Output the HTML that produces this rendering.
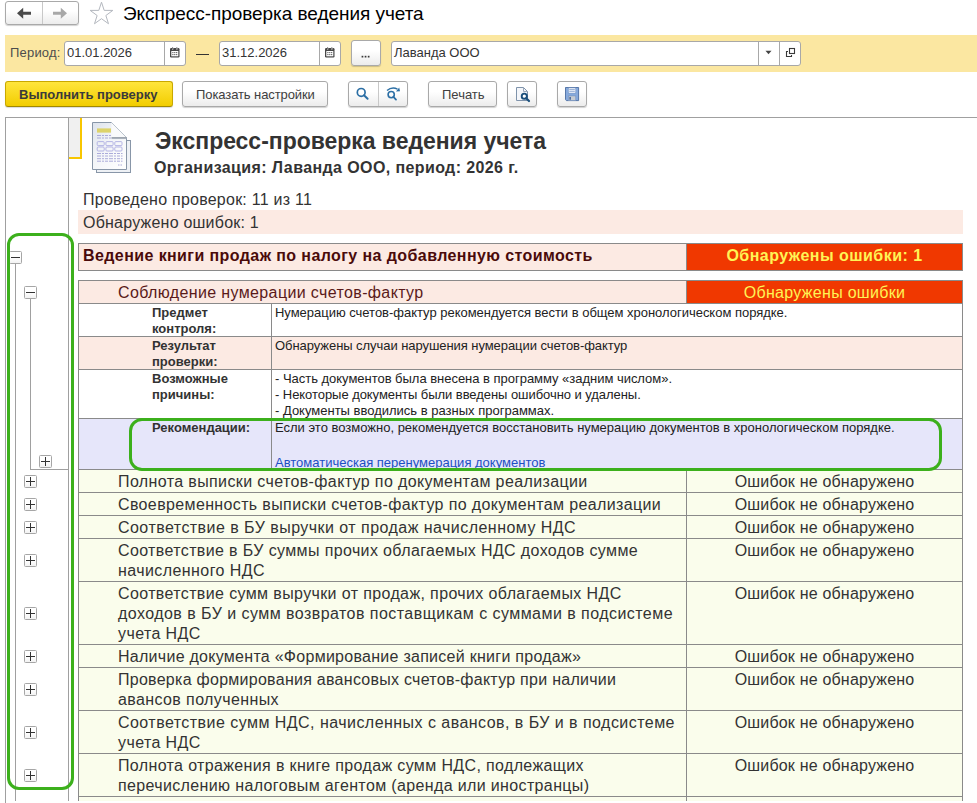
<!DOCTYPE html>
<html><head><meta charset="utf-8"><style>
*{box-sizing:border-box}
html,body{margin:0;padding:0}
body{width:977px;height:803px;overflow:hidden;background:#fff;position:relative;font-family:"Liberation Sans",sans-serif;color:#333}
.a{position:absolute}
.t{position:absolute;white-space:nowrap}
.btn{position:absolute;border:1px solid #a9a9a9;border-radius:3px;background:linear-gradient(#ffffff 40%,#ececec);box-shadow:0 1px 1px rgba(0,0,0,.18)}
.inp{position:absolute;background:#fff;border:1px solid #a8a8a8;border-radius:3px}
.box{position:absolute;width:13px;height:13px;border:1px solid #a6a6a6;border-radius:1.5px;background:linear-gradient(#fff 50%,#f2f2f2)}
.box:before{content:"";position:absolute;left:1px;top:5px;width:9px;height:1px;background:#333}
.box.p:after{content:"";position:absolute;left:5px;top:1px;width:1px;height:9px;background:#333}
</style></head><body>
<div class="btn" style="left:5px;top:1px;width:74px;height:24px"></div>
<div class="a" style="left:42px;top:2px;width:1px;height:22px;background:#c8c8c8;"></div>
<svg class="a" style="left:0;top:0" width="80" height="30" viewBox="0 0 80 30"><path d="M17 13.3 L23.2 7.8 V11.8 H31 V14.8 H23.2 V18.8 Z" fill="#4a4a4a"/><path d="M67 13.3 L60.8 7.8 V11.8 H53 V14.8 H60.8 V18.8 Z" fill="#a8a8a8"/></svg>
<svg class="a" style="left:89px;top:1px" width="26" height="24" viewBox="0 0 26 24"><path d="M12.50 1.20 L15.20 9.38 L23.82 9.42 L16.87 14.52 L19.49 22.73 L12.50 17.70 L5.51 22.73 L8.13 14.52 L1.18 9.42 L9.80 9.38 Z" fill="none" stroke="#b4b8bf" stroke-width="1"/></svg>
<div class="t" style="left:123px;top:3px;font-size:19px;line-height:22px;color:#000;letter-spacing:-0.05px;">Экспресс-проверка ведения учета</div>
<div class="a" style="left:5px;top:35px;width:972px;height:37px;background:#fbe7a1;"></div>
<div class="t" style="left:10px;top:45px;font-size:13px;line-height:16px;color:#4d4d4d;letter-spacing:0.2px;">Период:</div>
<div class="inp" style="left:64px;top:41px;width:122px;height:25px"></div>
<div class="a" style="left:164px;top:42px;width:1px;height:23px;background:#a8a8a8;"></div>
<svg class="a" style="left:170px;top:47px" width="10" height="11" viewBox="0 0 10 11"><rect x="0" y="1" width="9.5" height="9.5" rx="1.2" fill="#474747"/><rect x="1.3" y="4" width="7" height="5.3" fill="#fff"/><rect x="2" y="0" width="1.3" height="2.5" fill="#fff"/><rect x="6.2" y="0" width="1.3" height="2.5" fill="#fff"/><rect x="2.2" y="0.3" width="0.9" height="1.6" fill="#474747"/><rect x="6.4" y="0.3" width="0.9" height="1.6" fill="#474747"/><g fill="#474747"><circle cx="2.9" cy="5.6" r=".65"/><circle cx="4.8" cy="5.6" r=".65"/><circle cx="6.7" cy="5.6" r=".65"/><circle cx="2.9" cy="7.6" r=".65"/><circle cx="4.8" cy="7.6" r=".65"/><circle cx="6.7" cy="7.6" r=".65"/></g></svg>
<div class="t" style="left:67px;top:45px;font-size:13px;line-height:16px;color:#333;">01.01.2026</div>
<div class="a" style="left:196px;top:54px;width:13px;height:1px;background:#333;"></div>
<div class="inp" style="left:219px;top:41px;width:122px;height:25px"></div>
<div class="a" style="left:319px;top:42px;width:1px;height:23px;background:#a8a8a8;"></div>
<svg class="a" style="left:325px;top:47px" width="10" height="11" viewBox="0 0 10 11"><rect x="0" y="1" width="9.5" height="9.5" rx="1.2" fill="#474747"/><rect x="1.3" y="4" width="7" height="5.3" fill="#fff"/><rect x="2" y="0" width="1.3" height="2.5" fill="#fff"/><rect x="6.2" y="0" width="1.3" height="2.5" fill="#fff"/><rect x="2.2" y="0.3" width="0.9" height="1.6" fill="#474747"/><rect x="6.4" y="0.3" width="0.9" height="1.6" fill="#474747"/><g fill="#474747"><circle cx="2.9" cy="5.6" r=".65"/><circle cx="4.8" cy="5.6" r=".65"/><circle cx="6.7" cy="5.6" r=".65"/><circle cx="2.9" cy="7.6" r=".65"/><circle cx="4.8" cy="7.6" r=".65"/><circle cx="6.7" cy="7.6" r=".65"/></g></svg>
<div class="t" style="left:222px;top:45px;font-size:13px;line-height:16px;color:#333;">31.12.2026</div>
<div class="btn" style="left:351px;top:40px;width:30px;height:26px"></div>
<svg class="a" style="left:360px;top:54px" width="11" height="5" viewBox="0 0 11 5"><g fill="#3a3a3a"><rect x="1.6" y="1.8" width="1.7" height="1.7"/><rect x="4.7" y="1.8" width="1.7" height="1.7"/><rect x="7.8" y="1.8" width="1.7" height="1.7"/></g></svg>
<div class="inp" style="left:391px;top:41px;width:410px;height:25px"></div>
<div class="a" style="left:758px;top:42px;width:1px;height:23px;background:#a8a8a8;"></div>
<div class="a" style="left:779px;top:42px;width:1px;height:23px;background:#a8a8a8;"></div>
<div class="t" style="left:394px;top:45px;font-size:13px;line-height:16px;color:#333;">Лаванда ООО</div>
<svg class="a" style="left:765px;top:50px" width="7" height="5" viewBox="0 0 7 5"><path d="M0.5 0.8 H6.5 L3.5 4.2 Z" fill="#444"/></svg>
<svg class="a" style="left:785px;top:47px" width="11" height="11" viewBox="0 0 11 11"><rect x="4.5" y="1.5" width="5" height="5" fill="none" stroke="#3a3a3a" stroke-width="1.1"/><path d="M3 4.5 H1.5 V9.5 H6.5 V8" fill="none" stroke="#3a3a3a" stroke-width="1.1"/></svg>
<div class="a" style="left:5px;top:81px;width:168px;height:26px;background:linear-gradient(#ffe53d,#f2cd00);border:1px solid #c9a800;border-bottom-color:#a08800;border-radius:3px;box-shadow:0 1px 1px rgba(0,0,0,.15);"></div>
<div class="t" style="left:19px;top:87px;font-size:13px;line-height:16px;color:#3a3a3a;font-weight:bold;">Выполнить проверку</div>
<div class="btn" style="left:182px;top:81px;width:146px;height:26px"></div>
<div class="t" style="left:196px;top:87px;font-size:13px;line-height:16px;color:#404040;letter-spacing:-0.09px;">Показать настройки</div>
<div class="btn" style="left:348px;top:81px;width:60px;height:26px"></div>
<div class="a" style="left:378px;top:82px;width:1px;height:24px;background:#c8c8c8;"></div>
<svg class="a" style="left:355px;top:86px" width="16" height="16" viewBox="0 0 16 16"><circle cx="6.2" cy="6.4" r="3.9" fill="none" stroke="#2c6fa5" stroke-width="1.7"/><path d="M9 9.2 L12.6 12.8" stroke="#2c6fa5" stroke-width="2" stroke-linecap="round"/></svg>
<svg class="a" style="left:385px;top:86px" width="18" height="16" viewBox="0 0 18 16"><circle cx="6.2" cy="8.6" r="3.1" fill="none" stroke="#2c6fa5" stroke-width="1.6"/><path d="M8.4 10.9 L11 13.6" stroke="#2c6fa5" stroke-width="1.8" stroke-linecap="round"/><path d="M2 4.5 Q7 0.5 12.5 3.2" fill="none" stroke="#2c6fa5" stroke-width="1.5"/><path d="M11 5.5 L15 5.2 L14.2 1.5 Z" fill="#2c6fa5"/></svg>
<div class="btn" style="left:428px;top:81px;width:69px;height:26px"></div>
<div class="t" style="left:442px;top:87px;font-size:13px;line-height:16px;color:#404040;">Печать</div>
<div class="btn" style="left:507px;top:81px;width:30px;height:26px"></div>
<svg class="a" style="left:515px;top:86px" width="16" height="17" viewBox="0 0 16 17"><path d="M1.5 1.5 H8.5 L12.5 5.5 V14.5 H1.5 Z" fill="#f4f6fa" stroke="#7f93ab" stroke-width="1"/><path d="M8.5 1.5 V5.5 H12.5" fill="none" stroke="#9aa8ba" stroke-width="1"/><circle cx="9.3" cy="10.2" r="2.6" fill="#fff" stroke="#1b4f7c" stroke-width="1.9"/><path d="M11.2 12.2 L14 15" stroke="#1b4f7c" stroke-width="2.2" stroke-linecap="round"/></svg>
<div class="btn" style="left:557px;top:81px;width:30px;height:26px"></div>
<svg class="a" style="left:565px;top:87px" width="15" height="15" viewBox="0 0 16 16"><path d="M0.5 0.5 H14.5 V14.5 H1.5 L0.5 13.5 Z" fill="#86a9dc" stroke="#4d6fa3" stroke-width="1"/><rect x="3.5" y="1" width="8" height="5.5" fill="#fafcff" stroke="#6e8fc0" stroke-width=".6"/><path d="M4.5 2.8 H10.5 M4.5 4.6 H10.5" stroke="#7c9bcb" stroke-width=".9"/><rect x="3.5" y="9.5" width="8" height="5" fill="#c7ccd2" stroke="#6e8fc0" stroke-width=".6"/><rect x="4.6" y="10.6" width="1.8" height="3" fill="#4d6fa3"/></svg>
<div class="a" style="left:5px;top:117px;width:972px;height:1px;background:#a0a0a0;"></div>
<div class="a" style="left:5px;top:117px;width:1px;height:686px;background:#a0a0a0;"></div>
<div class="a" style="left:68px;top:117px;width:1px;height:684px;background:#a0a0a0;"></div>
<div class="a" style="left:69px;top:118px;width:11px;height:39px;background:#f0f0f0;"></div>
<div class="a" style="left:80px;top:118px;width:2px;height:41px;background:#f8c600;"></div>
<div class="a" style="left:69px;top:157px;width:13px;height:2px;background:#f8c600;"></div>
<svg class="a" style="left:90px;top:120px" width="44" height="56" viewBox="0 0 44 56">
<defs><linearGradient id="pg" x1="0" y1="0" x2="1" y2="1"><stop offset="0" stop-color="#dde3ec"/><stop offset=".45" stop-color="#f3f5f8"/><stop offset="1" stop-color="#ffffff"/></linearGradient>
<linearGradient id="fd" x1="0" y1="0" x2="0" y2="1"><stop offset="0" stop-color="#6f7a88"/><stop offset="1" stop-color="#c8ced6"/></linearGradient></defs>
<rect x="6.5" y="20.5" width="34" height="32" fill="#eef1f5" stroke="#8896a8" stroke-width="1"/>
<path d="M2.5 2.5 H21.5 L36.5 17.5 V49.5 H2.5 Z" fill="url(#pg)" stroke="#8896a8" stroke-width="1"/>
<path d="M21.5 2.5 L36.5 17.5 H21.5 Z" fill="#f9fafb"/>
<path d="M21.5 2.5 L36.5 17.5" stroke="#b9c1cc" stroke-width=".8"/>
<rect x="21.5" y="17.3" width="15" height="1.8" fill="url(#fd)"/>
<rect x="7" y="8.4" width="14" height="4.2" fill="#ddd36a"/>
<g fill="none" stroke="#a9a9e0" stroke-width=".85"><rect x="7.2" y="21.6" width="7" height="4" rx="1"/><rect x="15.9" y="21.6" width="7.2" height="4" rx="1"/><rect x="24.8" y="21.6" width="7.2" height="4" rx="1"/>
<rect x="7.2" y="27" width="7" height="4" rx="1"/><rect x="15.9" y="27" width="7.2" height="4" rx="1"/><rect x="24.8" y="27" width="7.2" height="4" rx="1"/></g>
<g stroke="#a3a3d6" stroke-width=".9" stroke-dasharray="4 1 2 1 3 1"><path d="M7 15.5 H21 M7 18 H21 M7 33.5 H32.5 M7 36 H32.5 M7 38.7 H32.5 M7 41.2 H32.5"/></g>
<path d="M28 45 H32" stroke="#a3a3d6" stroke-width=".9" stroke-dasharray="1.5 1"/>
</svg>
<div class="t" style="left:155px;top:127px;font-size:23px;line-height:28px;color:#333;font-weight:bold;letter-spacing:-0.03px;">Экспресс-проверка ведения учета</div>
<div class="t" style="left:154px;top:158px;font-size:16px;line-height:20px;color:#333;font-weight:bold;letter-spacing:0.395px;">Организация: Лаванда ООО, период: 2026 г.</div>
<div class="t" style="left:83px;top:190px;font-size:16px;line-height:20px;color:#333;letter-spacing:0.24px;">Проведено проверок: 11 из 11</div>
<div class="a" style="left:78px;top:210px;width:885px;height:24px;background:#fceae3;"></div>
<div class="t" style="left:83px;top:213px;font-size:16px;line-height:20px;color:#333;letter-spacing:0.22px;">Обнаружено ошибок: 1</div>
<div class="a" style="left:78px;top:243px;width:885px;height:28px;background:#fceae3;"></div>
<div class="a" style="left:687px;top:244px;width:275px;height:26px;background:#f03800;"></div>
<div class="a" style="left:78px;top:243px;width:885px;height:1px;background:#8a8a8a;"></div>
<div class="a" style="left:78px;top:270px;width:885px;height:1px;background:#8a8a8a;"></div>
<div class="a" style="left:78px;top:243px;width:1px;height:28px;background:#8a8a8a;"></div>
<div class="a" style="left:962px;top:243px;width:1px;height:28px;background:#8a8a8a;"></div>
<div class="a" style="left:686px;top:243px;width:1px;height:28px;background:#8a8a8a;"></div>
<div class="t" style="left:83px;top:246px;font-size:16px;line-height:20px;color:#4a0a0a;font-weight:bold;letter-spacing:0.41px;">Ведение книги продаж по налогу на добавленную стоимость</div>
<div class="t" style="left:687px;top:246px;width:275px;text-align:center;font-size:16px;line-height:20px;font-weight:bold;color:#fff455;letter-spacing:0.47px">Обнаружены ошибки: 1</div>
<div class="a" style="left:78px;top:280px;width:885px;height:24px;background:#fceae3;"></div>
<div class="a" style="left:687px;top:281px;width:275px;height:22px;background:#f03800;"></div>
<div class="a" style="left:78px;top:280px;width:885px;height:1px;background:#8a8a8a;"></div>
<div class="a" style="left:78px;top:303px;width:885px;height:1px;background:#8a8a8a;"></div>
<div class="a" style="left:78px;top:280px;width:1px;height:521px;background:#8a8a8a;"></div>
<div class="a" style="left:962px;top:280px;width:1px;height:521px;background:#8a8a8a;"></div>
<div class="a" style="left:686px;top:280px;width:1px;height:23px;background:#8a8a8a;"></div>
<div class="t" style="left:118px;top:283px;font-size:16px;line-height:20px;color:#5a1a1a;letter-spacing:0.37px;">Соблюдение нумерации счетов-фактур</div>
<div class="t" style="left:687px;top:283px;width:275px;text-align:center;font-size:16px;line-height:20px;color:#fff455;letter-spacing:0.3px">Обнаружены ошибки</div>
<div class="a" style="left:79px;top:304px;width:883px;height:32px;background:#fff;"></div>
<div class="a" style="left:78px;top:336px;width:885px;height:1px;background:#8a8a8a;"></div>
<div class="a" style="left:271px;top:303px;width:1px;height:33px;background:#8a8a8a;"></div>
<div class="t" style="left:152px;top:305px;font-size:13px;line-height:16px;color:#333;font-weight:bold;">Предмет<br>контроля:</div>
<div class="t" style="left:275px;top:305px;font-size:13px;line-height:16px;color:#222;"><span style="letter-spacing:-0.02px">Нумерацию счетов-фактур рекомендуется вести в общем хронологическом порядке.</span></div>
<div class="a" style="left:79px;top:337px;width:883px;height:32px;background:#fceae3;"></div>
<div class="a" style="left:78px;top:369px;width:885px;height:1px;background:#8a8a8a;"></div>
<div class="a" style="left:271px;top:336px;width:1px;height:33px;background:#8a8a8a;"></div>
<div class="t" style="left:152px;top:338px;font-size:13px;line-height:16px;color:#333;font-weight:bold;">Результат<br>проверки:</div>
<div class="t" style="left:275px;top:338px;font-size:13px;line-height:16px;color:#222;"><span style="letter-spacing:-0.06px">Обнаружены случаи нарушения нумерации счетов-фактур</span></div>
<div class="a" style="left:79px;top:370px;width:883px;height:48px;background:#fff;"></div>
<div class="a" style="left:78px;top:418px;width:885px;height:1px;background:#8a8a8a;"></div>
<div class="a" style="left:271px;top:369px;width:1px;height:49px;background:#8a8a8a;"></div>
<div class="t" style="left:152px;top:371px;font-size:13px;line-height:16px;color:#333;font-weight:bold;">Возможные<br>причины:</div>
<div class="t" style="left:275px;top:371px;font-size:13px;line-height:16px;color:#222;"><span style="letter-spacing:-0.025px">- Часть документов была внесена в программу «задним числом».</span><br><span style="letter-spacing:-0.055px">- Некоторые документы были введены ошибочно и удалены.</span><br>- Документы вводились в разных программах.</div>
<div class="a" style="left:79px;top:419px;width:883px;height:50px;background:#e6e6fa;"></div>
<div class="a" style="left:78px;top:469px;width:885px;height:1px;background:#8a8a8a;"></div>
<div class="a" style="left:271px;top:418px;width:1px;height:51px;background:#8a8a8a;"></div>
<div class="t" style="left:152px;top:420px;font-size:13px;line-height:16px;color:#333;font-weight:bold;">Рекомендации:</div>
<div class="t" style="left:275px;top:420px;font-size:13px;line-height:16px;color:#222;">Если это возможно, рекомендуется восстановить нумерацию документов в хронологическом порядке.</div>
<div class="t" style="left:275px;top:455px;font-size:13px;line-height:16px;color:#333;"><span style="color:#1d4fc4;text-decoration:underline">Автоматическая перенумерация документов</span></div>
<div class="a" style="left:79px;top:797px;width:883px;height:4px;background:#fafdec;"></div>
<div class="a" style="left:79px;top:470px;width:883px;height:22px;background:#fafdec;"></div>
<div class="a" style="left:78px;top:492px;width:885px;height:1px;background:#8a8a8a;"></div>
<div class="a" style="left:686px;top:469px;width:1px;height:23px;background:#8a8a8a;"></div>
<div class="t" style="left:118px;top:472px;font-size:16px;line-height:20px;color:#333;letter-spacing:0.377px;">Полнота выписки счетов-фактур по документам реализации</div>
<div class="t" style="left:687px;top:472px;width:275px;text-align:center;font-size:16px;line-height:20px;color:#333;letter-spacing:0.19px">Ошибок не обнаружено</div>
<div class="a" style="left:79px;top:493px;width:883px;height:22px;background:#fafdec;"></div>
<div class="a" style="left:78px;top:515px;width:885px;height:1px;background:#8a8a8a;"></div>
<div class="a" style="left:686px;top:492px;width:1px;height:23px;background:#8a8a8a;"></div>
<div class="t" style="left:118px;top:495px;font-size:16px;line-height:20px;color:#333;letter-spacing:0.364px;">Своевременность выписки счетов-фактур по документам реализации</div>
<div class="t" style="left:687px;top:495px;width:275px;text-align:center;font-size:16px;line-height:20px;color:#333;letter-spacing:0.19px">Ошибок не обнаружено</div>
<div class="a" style="left:79px;top:516px;width:883px;height:22px;background:#fafdec;"></div>
<div class="a" style="left:78px;top:538px;width:885px;height:1px;background:#8a8a8a;"></div>
<div class="a" style="left:686px;top:515px;width:1px;height:23px;background:#8a8a8a;"></div>
<div class="t" style="left:118px;top:518px;font-size:16px;line-height:20px;color:#333;letter-spacing:0.459px;">Соответствие в БУ выручки от продаж начисленному НДС</div>
<div class="t" style="left:687px;top:518px;width:275px;text-align:center;font-size:16px;line-height:20px;color:#333;letter-spacing:0.19px">Ошибок не обнаружено</div>
<div class="a" style="left:79px;top:539px;width:883px;height:42px;background:#fafdec;"></div>
<div class="a" style="left:78px;top:581px;width:885px;height:1px;background:#8a8a8a;"></div>
<div class="a" style="left:686px;top:538px;width:1px;height:43px;background:#8a8a8a;"></div>
<div class="t" style="left:118px;top:541px;font-size:16px;line-height:20px;color:#333;letter-spacing:0.372px;">Соответствие в БУ суммы прочих облагаемых НДС доходов сумме</div>
<div class="t" style="left:118px;top:561px;font-size:16px;line-height:20px;color:#333;letter-spacing:0.42px;">начисленного НДС</div>
<div class="t" style="left:687px;top:541px;width:275px;text-align:center;font-size:16px;line-height:20px;color:#333;letter-spacing:0.19px">Ошибок не обнаружено</div>
<div class="a" style="left:79px;top:582px;width:883px;height:62px;background:#fafdec;"></div>
<div class="a" style="left:78px;top:644px;width:885px;height:1px;background:#8a8a8a;"></div>
<div class="a" style="left:686px;top:581px;width:1px;height:63px;background:#8a8a8a;"></div>
<div class="t" style="left:118px;top:584px;font-size:16px;line-height:20px;color:#333;letter-spacing:0.375px;">Соответствие сумм выручки от продаж, прочих облагаемых НДС</div>
<div class="t" style="left:118px;top:604px;font-size:16px;line-height:20px;color:#333;letter-spacing:0.452px;">доходов в БУ и сумм возвратов поставщикам с суммами в подсистеме</div>
<div class="t" style="left:118px;top:624px;font-size:16px;line-height:20px;color:#333;letter-spacing:0.4px;">учета НДС</div>
<div class="t" style="left:687px;top:584px;width:275px;text-align:center;font-size:16px;line-height:20px;color:#333;letter-spacing:0.19px">Ошибок не обнаружено</div>
<div class="a" style="left:79px;top:645px;width:883px;height:22px;background:#fafdec;"></div>
<div class="a" style="left:78px;top:667px;width:885px;height:1px;background:#8a8a8a;"></div>
<div class="a" style="left:686px;top:644px;width:1px;height:23px;background:#8a8a8a;"></div>
<div class="t" style="left:118px;top:647px;font-size:16px;line-height:20px;color:#333;letter-spacing:0.271px;">Наличие документа «Формирование записей книги продаж»</div>
<div class="t" style="left:687px;top:647px;width:275px;text-align:center;font-size:16px;line-height:20px;color:#333;letter-spacing:0.19px">Ошибок не обнаружено</div>
<div class="a" style="left:79px;top:668px;width:883px;height:42px;background:#fafdec;"></div>
<div class="a" style="left:78px;top:710px;width:885px;height:1px;background:#8a8a8a;"></div>
<div class="a" style="left:686px;top:667px;width:1px;height:43px;background:#8a8a8a;"></div>
<div class="t" style="left:118px;top:670px;font-size:16px;line-height:20px;color:#333;letter-spacing:0.27px;">Проверка формирования авансовых счетов-фактур при наличии</div>
<div class="t" style="left:118px;top:690px;font-size:16px;line-height:20px;color:#333;letter-spacing:0.388px;">авансов полученных</div>
<div class="t" style="left:687px;top:670px;width:275px;text-align:center;font-size:16px;line-height:20px;color:#333;letter-spacing:0.19px">Ошибок не обнаружено</div>
<div class="a" style="left:79px;top:711px;width:883px;height:42px;background:#fafdec;"></div>
<div class="a" style="left:78px;top:753px;width:885px;height:1px;background:#8a8a8a;"></div>
<div class="a" style="left:686px;top:710px;width:1px;height:43px;background:#8a8a8a;"></div>
<div class="t" style="left:118px;top:713px;font-size:16px;line-height:20px;color:#333;letter-spacing:0.458px;">Соответствие сумм НДС, начисленных с авансов, в БУ и в подсистеме</div>
<div class="t" style="left:118px;top:733px;font-size:16px;line-height:20px;color:#333;letter-spacing:0.4px;">учета НДС</div>
<div class="t" style="left:687px;top:713px;width:275px;text-align:center;font-size:16px;line-height:20px;color:#333;letter-spacing:0.19px">Ошибок не обнаружено</div>
<div class="a" style="left:79px;top:754px;width:883px;height:42px;background:#fafdec;"></div>
<div class="a" style="left:78px;top:796px;width:885px;height:1px;background:#8a8a8a;"></div>
<div class="a" style="left:686px;top:753px;width:1px;height:43px;background:#8a8a8a;"></div>
<div class="t" style="left:118px;top:756px;font-size:16px;line-height:20px;color:#333;letter-spacing:0.36px;">Полнота отражения в книге продаж сумм НДС, подлежащих</div>
<div class="t" style="left:118px;top:776px;font-size:16px;line-height:20px;color:#333;letter-spacing:0.36px;">перечислению налоговым агентом (аренда или иностранцы)</div>
<div class="t" style="left:687px;top:756px;width:275px;text-align:center;font-size:16px;line-height:20px;color:#333;letter-spacing:0.19px">Ошибок не обнаружено</div>
<div class="a" style="left:686px;top:796px;width:1px;height:5px;background:#8a8a8a;"></div>
<div class="a" style="left:15px;top:264px;width:1px;height:537px;background:#a0a0a0;"></div>
<div class="a" style="left:30px;top:299px;width:1px;height:170px;background:#a0a0a0;"></div>
<div class="a" style="left:30px;top:469px;width:38px;height:1px;background:#a0a0a0;"></div>
<div class="box" style="left:9px;top:251px"></div>
<div class="box" style="left:24px;top:286px"></div>
<div class="box p" style="left:39px;top:455px"></div>
<div class="box p" style="left:24px;top:475px"></div>
<div class="box p" style="left:24px;top:498px"></div>
<div class="box p" style="left:24px;top:521px"></div>
<div class="box p" style="left:24px;top:554px"></div>
<div class="box p" style="left:24px;top:607px"></div>
<div class="box p" style="left:24px;top:650px"></div>
<div class="box p" style="left:24px;top:683px"></div>
<div class="box p" style="left:24px;top:726px"></div>
<div class="box p" style="left:24px;top:769px"></div>
<div class="a" style="left:7px;top:233px;width:67px;height:557px;border:3px solid #3cb01c;border-radius:12px"></div>
<div class="a" style="left:129px;top:418px;width:813px;height:53px;border:3px solid #3cb01c;border-radius:13px"></div>
</body></html>
